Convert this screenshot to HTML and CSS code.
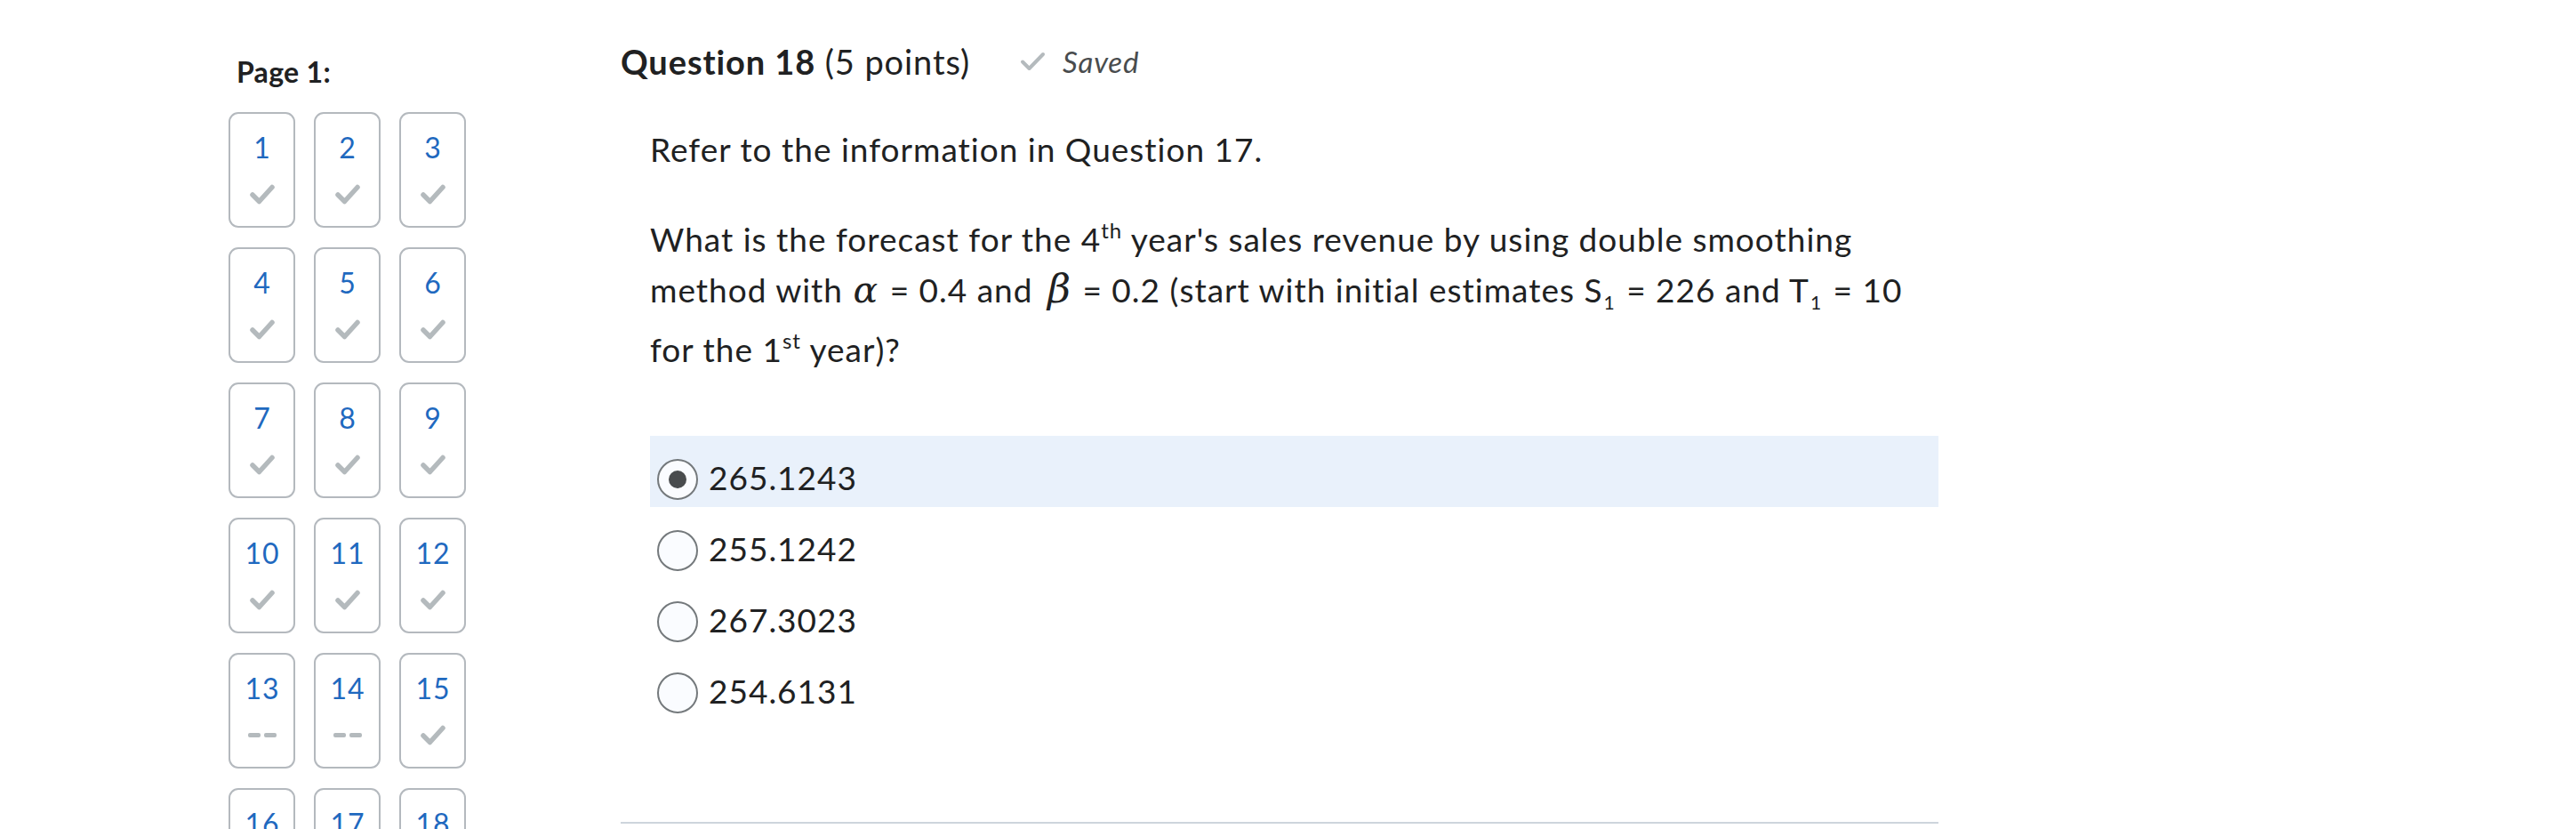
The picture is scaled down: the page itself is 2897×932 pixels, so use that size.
FILE: index.html
```html
<!DOCTYPE html>
<html lang="en">
<head>
<meta charset="utf-8">
<title>Question 18</title>
<link rel="stylesheet" href="styles.css">
</head>
<body>
<div class="page">
  <aside class="nav">
    <h2 class="nav-title">Page 1:</h2>
    <ul class="tiles">
      <li class="tile"><span class="tile-num">1</span><span class="tile-status"><svg class="check" viewBox="0 0 28 23"><polyline points="3,12 10.5,19.5 25,3.5"/></svg></span></li>
      <li class="tile"><span class="tile-num">2</span><span class="tile-status"><svg class="check" viewBox="0 0 28 23"><polyline points="3,12 10.5,19.5 25,3.5"/></svg></span></li>
      <li class="tile"><span class="tile-num">3</span><span class="tile-status"><svg class="check" viewBox="0 0 28 23"><polyline points="3,12 10.5,19.5 25,3.5"/></svg></span></li>
      <li class="tile"><span class="tile-num">4</span><span class="tile-status"><svg class="check" viewBox="0 0 28 23"><polyline points="3,12 10.5,19.5 25,3.5"/></svg></span></li>
      <li class="tile"><span class="tile-num">5</span><span class="tile-status"><svg class="check" viewBox="0 0 28 23"><polyline points="3,12 10.5,19.5 25,3.5"/></svg></span></li>
      <li class="tile"><span class="tile-num">6</span><span class="tile-status"><svg class="check" viewBox="0 0 28 23"><polyline points="3,12 10.5,19.5 25,3.5"/></svg></span></li>
      <li class="tile"><span class="tile-num">7</span><span class="tile-status"><svg class="check" viewBox="0 0 28 23"><polyline points="3,12 10.5,19.5 25,3.5"/></svg></span></li>
      <li class="tile"><span class="tile-num">8</span><span class="tile-status"><svg class="check" viewBox="0 0 28 23"><polyline points="3,12 10.5,19.5 25,3.5"/></svg></span></li>
      <li class="tile"><span class="tile-num">9</span><span class="tile-status"><svg class="check" viewBox="0 0 28 23"><polyline points="3,12 10.5,19.5 25,3.5"/></svg></span></li>
      <li class="tile"><span class="tile-num">10</span><span class="tile-status"><svg class="check" viewBox="0 0 28 23"><polyline points="3,12 10.5,19.5 25,3.5"/></svg></span></li>
      <li class="tile"><span class="tile-num">11</span><span class="tile-status"><svg class="check" viewBox="0 0 28 23"><polyline points="3,12 10.5,19.5 25,3.5"/></svg></span></li>
      <li class="tile"><span class="tile-num">12</span><span class="tile-status"><svg class="check" viewBox="0 0 28 23"><polyline points="3,12 10.5,19.5 25,3.5"/></svg></span></li>
      <li class="tile"><span class="tile-num">13</span><span class="tile-status"><span class="dash"></span><span class="dash"></span></span></li>
      <li class="tile"><span class="tile-num">14</span><span class="tile-status"><span class="dash"></span><span class="dash"></span></span></li>
      <li class="tile"><span class="tile-num">15</span><span class="tile-status"><svg class="check" viewBox="0 0 28 23"><polyline points="3,12 10.5,19.5 25,3.5"/></svg></span></li>
      <li class="tile"><span class="tile-num">16</span><span class="tile-status"><svg class="check" viewBox="0 0 28 23"><polyline points="3,12 10.5,19.5 25,3.5"/></svg></span></li>
      <li class="tile"><span class="tile-num">17</span><span class="tile-status"><svg class="check" viewBox="0 0 28 23"><polyline points="3,12 10.5,19.5 25,3.5"/></svg></span></li>
      <li class="tile"><span class="tile-num">18</span><span class="tile-status"><svg class="check" viewBox="0 0 28 23"><polyline points="3,12 10.5,19.5 25,3.5"/></svg></span></li>
    </ul>
  </aside>
  <main class="question">
    <div class="q-head">
      <h1 class="q-title"><strong>Question 18</strong> (5 points)</h1>
      <span class="saved"><svg class="saved-check" viewBox="0 0 29 22"><polyline points="3,11.5 10.5,19 26,3"/></svg>Saved</span>
    </div>
    <div class="q-body">
      <p>Refer to the information in Question 17.</p>
      <p>What is the forecast for the 4<sup>th</sup> year's sales revenue by using double smoothing method with <span class="math alpha">α</span> = 0.4 and <span class="math beta">β</span> = 0.2 (start with initial estimates S<sub>1</sub> = 226 and T<sub>1</sub> = 10 for the 1<sup>st</sup> year)?</p>
      <ul class="options">
        <li class="option selected"><span class="radio checked"><span class="dot"></span></span><span class="option-label">265.1243</span></li>
        <li class="option"><span class="radio"></span><span class="option-label">255.1242</span></li>
        <li class="option"><span class="radio"></span><span class="option-label">267.3023</span></li>
        <li class="option"><span class="radio"></span><span class="option-label">254.6131</span></li>
      </ul>
    </div>
    <hr class="divider">
  </main>
</div>
</body>
</html>
```

FILE: styles.css
```css
html, body {
  margin: 0;
  background: #ffffff;
}

body {
  font-family: Lato, "Noto Sans", sans-serif;
  color: #202122;
}

.page {
  display: flex;
  align-items: flex-start;
  padding: 46px 0 0 257px;
}

/* ---------- left navigation ---------- */
.nav {
  flex: none;
  width: 267px;
  margin-top: 15px;
}

.nav-title {
  margin: 0 0 26px 9px;
  font-size: 32px;
  font-weight: 700;
  letter-spacing: 0.3px;
  line-height: normal;
}

.tiles {
  list-style: none;
  margin: 0;
  padding: 0;
  display: grid;
  grid-template-columns: repeat(3, 75px);
  column-gap: 21px;
  row-gap: 22px;
}

.tile {
  box-sizing: border-box;
  height: 130px;
  border: 2px solid #b4b9be;
  border-radius: 11px;
  display: flex;
  flex-direction: column;
  align-items: center;
  padding-top: 20px;
}

.tile-num {
  font-size: 32px;
  line-height: 36px;
  letter-spacing: 1px;
  text-indent: 1px;
  color: #1f69bf;
}

.tile-status {
  height: 23px;
  margin-top: 23px;
  display: flex;
  align-items: center;
  justify-content: center;
  gap: 4px;
}

.check {
  width: 28px;
  height: 23px;
  fill: none;
  stroke: #b4babd;
  stroke-width: 5.5;
  stroke-linecap: round;
  stroke-linejoin: round;
}

.dash {
  width: 14px;
  height: 5px;
  border-radius: 2px;
  background: #b4babd;
}

/* ---------- question ---------- */
.question {
  flex: none;
  width: 1482px;
  margin-left: 174px;
}

.q-head {
  display: flex;
  align-items: center;
}

.q-title {
  margin: 0;
  font-size: 38px;
  font-weight: 400;
  letter-spacing: 0.9px;
  line-height: normal;
}

.q-title strong {
  font-weight: 700;
}

.saved {
  display: flex;
  align-items: center;
  gap: 19px;
  margin-left: 56px;
  font-size: 33px;
  font-style: italic;
  letter-spacing: 0.8px;
  color: #494c4e;
}

.saved-check {
  width: 29px;
  height: 22px;
  fill: none;
  stroke: #b4babd;
  stroke-width: 4;
  stroke-linecap: round;
  stroke-linejoin: round;
}

.q-body {
  margin: 47px 0 0 33px;
}

.q-body p {
  max-width: 1440px;
  margin: 0 0 44px;
  font-size: 37px;
  letter-spacing: 1px;
  line-height: 57px;
}

.q-body sup {
  font-size: 24px;
  line-height: normal;
  vertical-align: 15px;
}

.q-body sub {
  display: inline-block;
  font-size: 21px;
  line-height: 21px;
  vertical-align: -8px;
  margin: 0 2px 14px 1px;
}

.math {
  font-family: "DejaVu Serif", serif;
  font-style: italic;
  line-height: 1;
  letter-spacing: 0;
}

.alpha {
  font-size: 41px;
  margin: 0 3px 0 1px;
}

.beta {
  font-size: 45px;
  margin: 0 3px 0 6px;
}

.options {
  list-style: none;
  margin: 69px 0 0;
  padding: 0;
}

.option {
  box-sizing: border-box;
  height: 80px;
  display: flex;
  align-items: flex-start;
  gap: 12px;
  padding: 24px 0 0 8px;
}

.option.selected {
  background: #e9f1fb;
}

.radio {
  flex: none;
  box-sizing: border-box;
  width: 46px;
  height: 46px;
  margin-top: 2px;
  border: 2px solid #74797c;
  border-radius: 50%;
  background: #fafcff;
  display: flex;
  align-items: center;
  justify-content: center;
}

.dot {
  width: 20px;
  height: 20px;
  border-radius: 50%;
  background: #494c4e;
}

.option-label {
  font-size: 37px;
  letter-spacing: 1px;
  line-height: normal;
}

.divider {
  margin: 114px 0 0;
  border: 0;
  height: 2px;
  background: #cdd5dc;
}
```
